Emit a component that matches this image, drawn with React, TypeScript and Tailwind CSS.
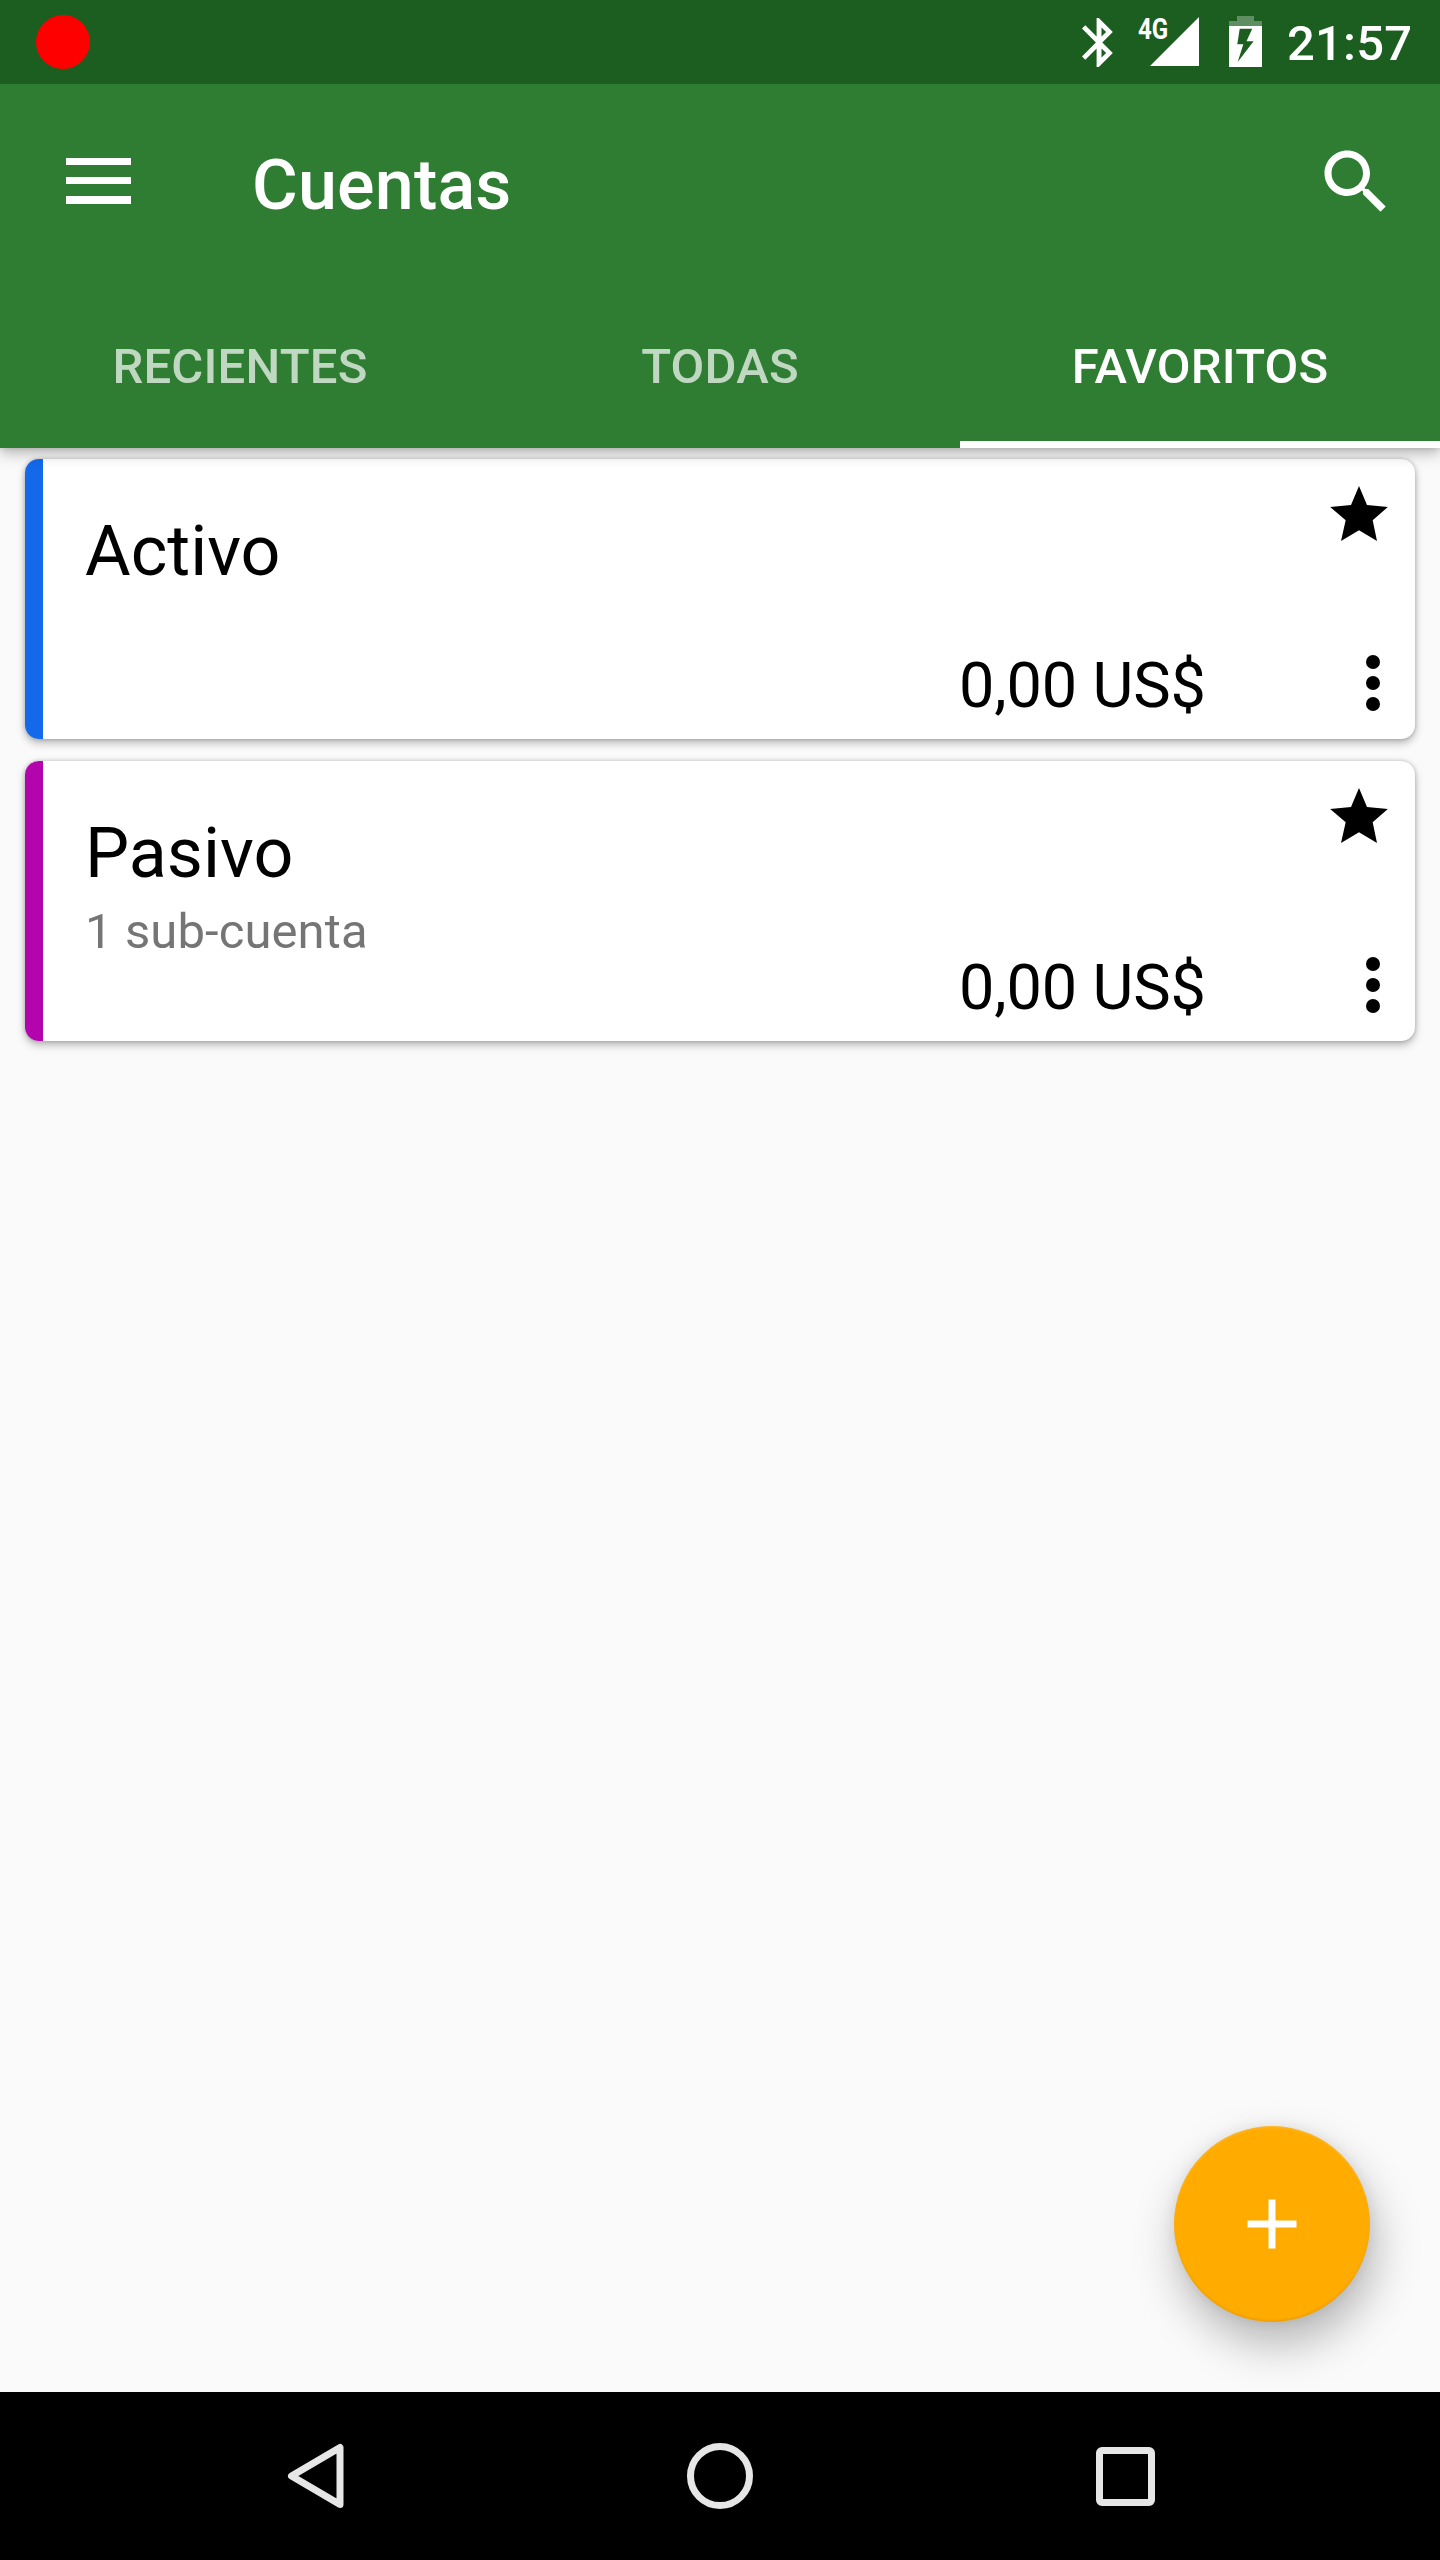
type Account = {
  name: string;
  detail?: string;
  balance: string;
  stripe: string;
};

const accounts: Account[] = [
  { name: "Activo", balance: "0,00 US$", stripe: "bg-[#1469eb]" },
  { name: "Pasivo", detail: "1 sub-cuenta", balance: "0,00 US$", stripe: "bg-[#b304ad]" },
];

const tabs = [
  { label: "RECIENTES", active: false },
  { label: "TODAS", active: false },
  { label: "FAVORITOS", active: true },
];

function BluetoothIcon() {
  return (
    <svg className="mt-[18px] h-[49px] w-[31px] shrink-0" viewBox="0 0 31 49" fill="white">
      <path
        fillRule="evenodd"
        d="M30.8 14 16.8 0H14.6V18.6L3.3 7.3 0 10.6 13.9 24.5 0 38.4 3.3 41.7 14.6 30.4V49H16.8L30.8 35 20.3 24.5ZM19.5 9.4 24.1 14 19.5 18.6ZM24.1 35 19.5 39.6V30.4Z"
      />
    </svg>
  );
}

function BatteryIcon() {
  return (
    <svg className="mt-[16px] ml-[30px] h-[51px] w-[33px] shrink-0" viewBox="0 0 33 51" fill="white">
      <path opacity="0.3" d="M8 0H25V5H33V10H0V5H8Z" />
      <path fillRule="evenodd" d="M0 10H33V51H0ZM10.7 12.7 8.3 28.3H14.3L8.7 46 24.6 25.3H17.5L23.2 12.7Z" />
    </svg>
  );
}

function StatusBar() {
  return (
    <div className="flex h-[84px] items-start bg-[#1b5e20] text-white">
      <div className="mt-[15px] ml-[36px] size-[54px] rounded-full bg-[#ff0000]" />
      <div className="flex-1" />
      <BluetoothIcon />
      <div className="relative mt-[17px] ml-[37px] h-[49px] w-[49px] shrink-0">
        <svg className="size-[49px]" viewBox="0 0 49 49" fill="white">
          <path d="M0 49H49V0Z" />
        </svg>
        <span className="absolute top-[-5px] left-[-12px] origin-left scale-x-[0.83] text-[29px] leading-[34px] font-bold">
          4G
        </span>
      </div>
      <BatteryIcon />
      <span className="mt-[14px] mr-[28px] ml-[25px] w-[125px] text-[49px] leading-[60px] font-medium tracking-[0.2px] whitespace-nowrap">
        21:57
      </span>
    </div>
  );
}

function Header() {
  return (
    <header className="relative z-10 bg-[#2e7d32] shadow-[0_5px_14px_rgba(0,0,0,0.28),0_1px_5px_rgba(0,0,0,0.1)]">
      <StatusBar />
      <div className="flex h-[196px] text-white">
        <div className="mt-[73.5px] ml-[65.5px] flex h-[46px] w-[65.5px] flex-col justify-between">
          <div className="h-[7.5px] bg-white" />
          <div className="h-[7.5px] bg-white" />
          <div className="h-[7.5px] bg-white" />
        </div>
        <h1 className="mt-[60px] ml-[121px] flex-1 text-[70px] leading-[82px] font-medium tracking-[0.2px]">Cuentas</h1>
        <svg className="mt-[55.5px] mr-[42px] size-[84px]" viewBox="0 0 24 24" fill="white">
          <path d="M15.5 14h-.79l-.28-.27C15.41 12.59 16 11.11 16 9.5 16 5.91 13.09 3 9.5 3S3 5.91 3 9.5 5.91 16 9.5 16c1.61 0 3.09-.59 4.23-1.57l.27.28v.79l5 4.99L20.49 19l-4.99-5zm-6 0C7.01 14 5 11.99 5 9.5S7.01 5 9.5 5 14 7.01 14 9.5 11.99 14 9.5 14z" />
        </svg>
      </div>
      <nav className="grid h-[168px] grid-cols-3">
        {tabs.map((tab) => (
          <div
            key={tab.label}
            className={
              tab.active
                ? "border-b-[7px] border-white pt-[56px] text-center text-[49px] leading-[61px] font-medium tracking-[0.2px] text-white"
                : "pt-[56px] text-center text-[49px] leading-[61px] font-medium tracking-[0.2px] text-white/70"
            }
          >
            {tab.label}
          </div>
        ))}
      </nav>
    </header>
  );
}

function StarIcon() {
  return (
    <svg className="h-[55px] w-[58px]" viewBox="1230 138 174 165" fill="black">
      <path d="M1317 138 1341 195 1403.500 201 1358 241 1371 303 1317 271 1263 303 1277 241 1230.500 201 1293 195Z" />
    </svg>
  );
}

function AccountCard({ account }: { account: Account }) {
  return (
    <article className="flex h-[280px] rounded-[14px] bg-white shadow-[0_4px_8px_rgba(0,0,0,0.27),0_0_4px_rgba(0,0,0,0.2)]">
      <div className={`w-[18px] rounded-l-[14px] ${account.stripe}`} />
      <div className="flex-1 pt-[51px] pl-[42px]">
        <h2 className="text-[70px] leading-[82px] text-black">{account.name}</h2>
        {account.detail && (
          <p className="mt-[8px] text-[49px] leading-[59px] tracking-[0.1px] text-[#757575]">{account.detail}</p>
        )}
      </div>
      <div className="flex w-[456px] flex-col justify-between pt-[27px] pb-[16px]">
        <div className="flex justify-end pr-[27px]">
          <StarIcon />
        </div>
        <div className="flex items-center justify-between pr-[35px]">
          <span className="text-[63px] leading-[74px] tracking-[-0.15px] whitespace-nowrap text-black">
            {account.balance}
          </span>
          <div className="flex flex-col gap-[7px] pb-[7px]">
            <div className="size-[14px] rounded-full bg-black" />
            <div className="size-[14px] rounded-full bg-black" />
            <div className="size-[14px] rounded-full bg-black" />
          </div>
        </div>
      </div>
    </article>
  );
}

function NavigationBar() {
  return (
    <footer className="relative z-10 flex h-[168px] items-center bg-black">
      <svg className="ml-[287px] h-[66px] w-[57px]" viewBox="0 0 57 66" fill="none" stroke="#e6e6e6" strokeWidth="7" strokeLinejoin="round">
        <path d="M53 4.500V61.500L4.500 33Z" />
      </svg>
      <div className="ml-[343px] size-[66px] rounded-full border-[7.500px] border-[#e6e6e6]" />
      <div className="ml-[343px] size-[59px] rounded-[6px] border-[7px] border-[#e6e6e6]" />
    </footer>
  );
}

export default function App() {
  return (
    <div className="flex h-[2560px] w-[1440px] flex-col overflow-hidden bg-[#fafafa] font-['Roboto',sans-serif]">
      <Header />
      <main className="relative flex flex-1 flex-col gap-[22px] px-[25px] pt-[11px]">
        {accounts.map((account) => (
          <AccountCard key={account.name} account={account} />
        ))}
        <button className="absolute right-[70px] bottom-[70px] flex size-[196px] items-center justify-center rounded-full bg-[#ffab00] shadow-[5px_22px_46px_rgba(0,0,0,0.28),0_0_14px_rgba(0,0,0,0.08),inset_0_-2px_2px_rgba(0,0,0,0.06),inset_0_2px_2px_rgba(255,255,255,0.12)]">
          <svg className="size-[84px]" viewBox="0 0 24 24" fill="white">
            <path d="M19 13h-6v6h-2v-6H5v-2h6V5h2v6h6v2z" />
          </svg>
        </button>
      </main>
      <NavigationBar />
    </div>
  );
}
